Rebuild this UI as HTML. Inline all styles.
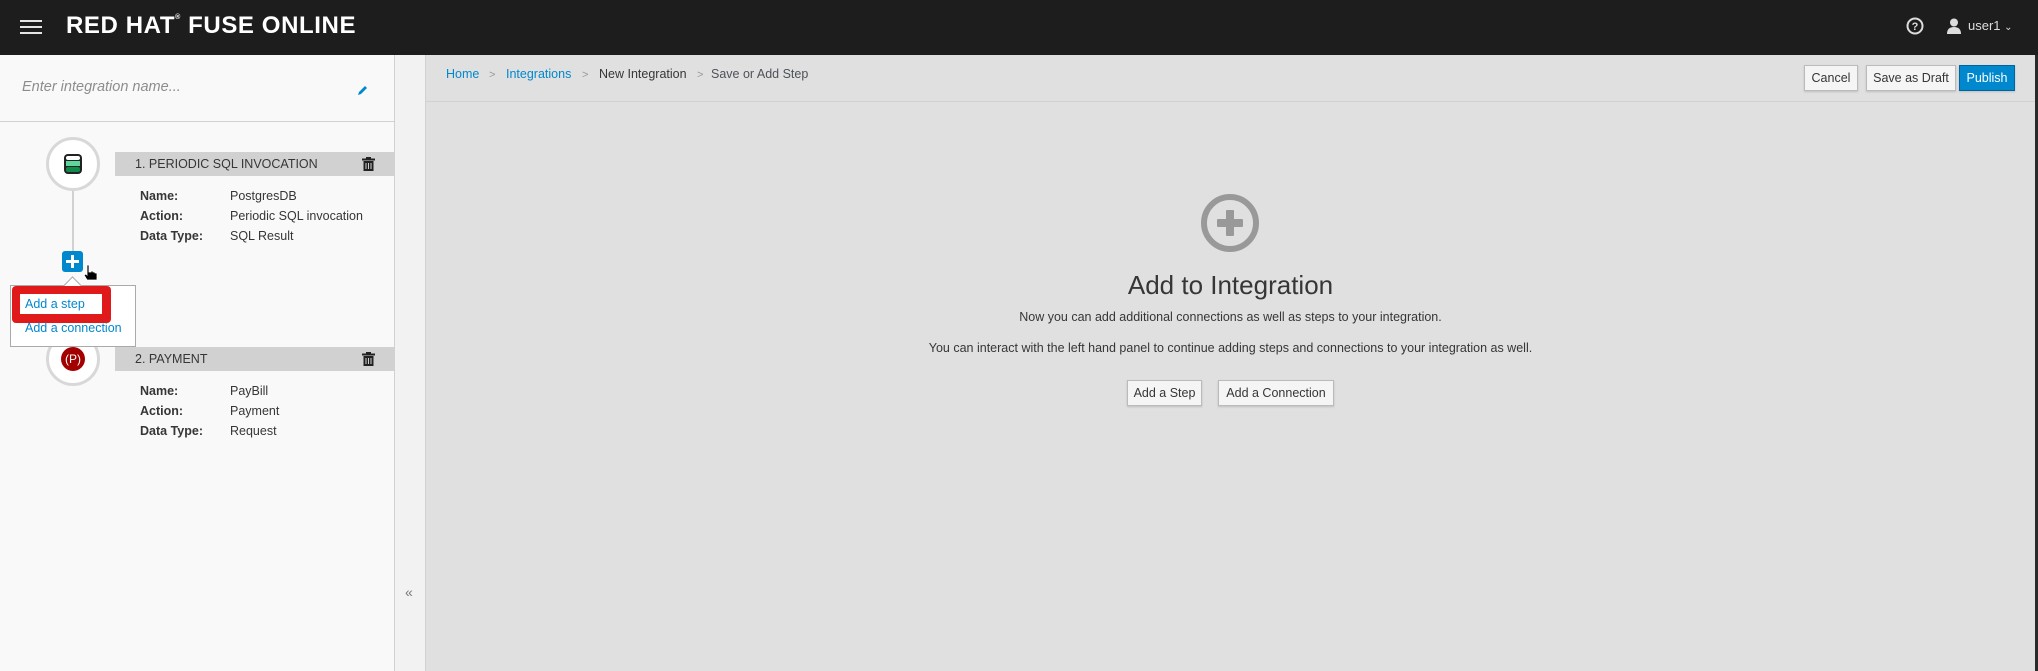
<!DOCTYPE html>
<html><head><meta charset="utf-8"><style>
*{box-sizing:border-box;margin:0;padding:0}
body{width:2038px;height:671px;overflow:hidden;font-family:"Liberation Sans",sans-serif;background:#e0e0e0;position:relative;color:#363636}
.a{position:absolute}
.hdr{left:0;top:0;width:2038px;height:55px;background:#1d1d1d}
.ham{left:20px;width:22px;height:2px;background:#e5e5e5}
.logo{left:66px;top:12px;color:#fff;font-weight:bold;font-size:24px;letter-spacing:0.6px;white-space:nowrap}
.left{left:0;top:55px;width:395px;height:616px;background:#f9f9f9;border-right:1px solid #d1d1d1}
.split{left:395px;top:55px;width:31px;height:616px;background:#f2f2f2;border-right:1px solid #d1d1d1}
.bar{left:115px;width:280px;height:24px;background:#d1d1d1;font-size:12.5px;padding-left:20px;line-height:24px;color:#363636}
.lbl{font-size:12.5px;font-weight:bold;color:#363636}
.val{font-size:12.5px;color:#363636}
.circ{width:54px;height:54px;border-radius:50%;border:3px solid #d8d8d8;background:#fff}
.btn{height:26px;border:1px solid #bbb;background:#f5f5f5;font-size:12.5px;line-height:24px;text-align:center;color:#363636;box-shadow:0 1px 2px rgba(0,0,0,.15)}
.bc{font-size:12.5px;top:67px}
</style></head><body>
<div class="a hdr"></div>
<div class="a ham" style="top:20px"></div><div class="a ham" style="top:26px"></div><div class="a ham" style="top:32px"></div>
<div class="a logo">RED HAT<sup style="font-size:7px;vertical-align:top;position:relative;top:2px">®</sup> FUSE ONLINE</div>
<svg class="a" style="left:1906px;top:17px" width="18" height="18" viewBox="0 0 18 18"><circle cx="9" cy="9" r="7.5" fill="none" stroke="#ddd" stroke-width="2"/><text x="9" y="13" text-anchor="middle" font-size="11" font-weight="bold" fill="#ddd" font-family="Liberation Sans">?</text></svg>
<svg class="a" style="left:1946px;top:18px" width="16" height="16" viewBox="0 0 16 16"><circle cx="8" cy="4.5" r="4" fill="#ddd"/><path d="M1 16 Q1 9 8 9 Q15 9 15 16Z" fill="#ddd"/></svg>
<div class="a" style="left:1968px;top:18px;color:#ddd;font-size:13px">user1 <span style="font-size:10px">&#8964;</span></div>
<div class="a" style="left:2035px;top:55px;width:3px;height:616px;background:#2a2a2a"></div>

<div class="a left"></div>
<div class="a" style="left:22px;top:79px;font-style:italic;font-size:14.5px;color:#8b8d8f">Enter integration name...</div>
<svg class="a" style="left:357px;top:84px" width="12" height="12" viewBox="0 0 12 12"><path d="M1 11 L2 8 L8 2 L10 4 L4 10Z" fill="#0088ce"/></svg>
<div class="a" style="left:0;top:121px;width:395px;height:1px;background:#d1d1d1"></div>

<div class="a" style="left:72px;top:190px;width:2px;height:62px;background:#d1d1d1"></div>
<div class="a circ" style="left:46px;top:137px"></div>
<svg class="a" style="left:63px;top:153px" width="20" height="22" viewBox="0 0 20 22"><rect x="1" y="1" width="18" height="20" rx="4" fill="#222"/><rect x="3" y="3" width="14" height="4" rx="2" fill="#fff"/><rect x="3" y="8" width="14" height="5" fill="#5fd49b"/><rect x="3" y="14" width="14" height="5" rx="2" fill="#0f8a4b"/></svg>
<div class="a bar" style="top:152px">1. PERIODIC SQL INVOCATION</div>
<svg class="a" style="left:362px;top:157px" width="13" height="14" viewBox="0 0 13 14"><rect x="0" y="1.5" width="13" height="2" fill="#222"/><rect x="4" y="0" width="5" height="2" fill="#222"/><path d="M1.5 4 H11.5 V14 H1.5Z" fill="#222"/><path d="M4 6 V12 M6.5 6 V12 M9 6 V12" stroke="#d1d1d1" stroke-width="1"/></svg>
<div class="a lbl" style="left:140px;top:189px">Name:</div><div class="a val" style="left:230px;top:189px">PostgresDB</div>
<div class="a lbl" style="left:140px;top:209px">Action:</div><div class="a val" style="left:230px;top:209px">Periodic SQL invocation</div>
<div class="a lbl" style="left:140px;top:229px">Data Type:</div><div class="a val" style="left:230px;top:229px">SQL Result</div>

<div class="a" style="left:62px;top:251px;width:21px;height:21px;background:#0088ce;border-radius:3px"></div>
<div class="a" style="left:66px;top:260px;width:13px;height:3px;background:#fff"></div>
<div class="a" style="left:71px;top:255px;width:3px;height:13px;background:#fff"></div>
<svg class="a" style="left:84px;top:264px" width="14" height="18" viewBox="0 0 14 18"><path d="M3 1 h2 v7 h2 v-1 h2 v1 h2 v1 h2 v7 h-10 l-3 -5 l2 -1 l1 1Z" fill="#000" stroke="#fff" stroke-width="0.8"/></svg>

<div class="a circ" style="left:46px;top:332px"></div>
<div class="a" style="left:61px;top:347px;width:24px;height:24px;border-radius:50%;background:#a30000;color:#fff;font-size:12px;text-align:center;line-height:24px">(P)</div>
<div class="a bar" style="top:347px">2. PAYMENT</div>
<svg class="a" style="left:362px;top:352px" width="13" height="14" viewBox="0 0 13 14"><rect x="0" y="1.5" width="13" height="2" fill="#222"/><rect x="4" y="0" width="5" height="2" fill="#222"/><path d="M1.5 4 H11.5 V14 H1.5Z" fill="#222"/><path d="M4 6 V12 M6.5 6 V12 M9 6 V12" stroke="#d1d1d1" stroke-width="1"/></svg>
<div class="a lbl" style="left:140px;top:384px">Name:</div><div class="a val" style="left:230px;top:384px">PayBill</div>
<div class="a lbl" style="left:140px;top:404px">Action:</div><div class="a val" style="left:230px;top:404px">Payment</div>
<div class="a lbl" style="left:140px;top:424px">Data Type:</div><div class="a val" style="left:230px;top:424px">Request</div>

<div class="a" style="left:10px;top:285px;width:126px;height:62px;background:#fff;border:1px solid #aaa"></div>
<div class="a" style="left:66px;top:279px;width:13px;height:13px;background:#fff;border-left:1px solid #aaa;border-top:1px solid #aaa;transform:rotate(45deg)"></div>
<div class="a" style="left:12px;top:286px;width:99px;height:37px;background:#e01a1a;border-radius:4px"></div>
<div class="a" style="left:20px;top:294px;width:82px;height:20px;background:#fff"></div>
<div class="a" style="left:25px;top:297px;font-size:12.5px;color:#0088ce">Add a step</div>
<div class="a" style="left:25px;top:321px;font-size:12.5px;color:#0088ce">Add a connection</div>

<div class="a split"></div>
<div class="a" style="left:405px;top:584px;font-size:14px;color:#777">«</div>

<div class="a" style="left:426px;top:101px;width:1609px;height:1px;background:#d1d1d1"></div>
<div class="a bc" style="left:446px;color:#0088ce">Home</div>
<div class="a bc" style="left:489px;color:#999;font-size:11px;top:69px">&gt;</div>
<div class="a bc" style="left:506px;color:#0088ce">Integrations</div>
<div class="a bc" style="left:582px;color:#999;font-size:11px;top:69px">&gt;</div>
<div class="a bc" style="left:599px;color:#363636">New Integration</div>
<div class="a bc" style="left:697px;color:#999;font-size:11px;top:69px">&gt;</div>
<div class="a bc" style="left:711px;color:#4d5258">Save or Add Step</div>
<div class="a btn" style="left:1804px;top:65px;width:54px">Cancel</div>
<div class="a btn" style="left:1866px;top:65px;width:90px">Save as Draft</div>
<div class="a btn" style="left:1959px;top:65px;width:56px;background:#0088ce;border-color:#00659c;color:#fff">Publish</div>

<svg class="a" style="left:1200px;top:193px" width="60" height="60" viewBox="0 0 60 60"><circle cx="30" cy="30" r="26" fill="none" stroke="#999" stroke-width="6"/><rect x="17" y="26" width="26" height="8" rx="1" fill="#999"/><rect x="26" y="17" width="8" height="26" rx="1" fill="#999"/></svg>
<div class="a" style="left:426px;width:1609px;top:270px;text-align:center;font-size:26px;color:#363636">Add to Integration</div>
<div class="a" style="left:426px;width:1609px;top:310px;text-align:center;font-size:12.5px">Now you can add additional connections as well as steps to your integration.</div>
<div class="a" style="left:426px;width:1609px;top:341px;text-align:center;font-size:12.5px">You can interact with the left hand panel to continue adding steps and connections to your integration as well.</div>
<div class="a btn" style="left:1127px;top:380px;width:75px">Add a Step</div>
<div class="a btn" style="left:1218px;top:380px;width:116px">Add a Connection</div>
</body></html>
